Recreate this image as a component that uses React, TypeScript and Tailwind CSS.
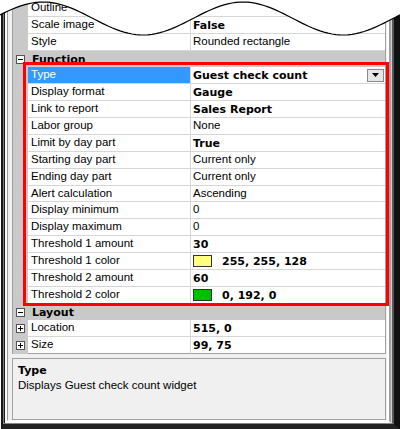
import React from "react";

type Row =
  | { kind: "prop"; label: string; value?: string; bold?: boolean; h: string; selected?: boolean; swatch?: string; plus?: boolean; dropdown?: boolean; last?: boolean }
  | { kind: "head"; label: string; h: string };

const rows: Row[] = [
  { kind: "prop", label: "Outline", value: "", h: "h-[17px]" },
  { kind: "prop", label: "Scale image", value: "False", bold: true, h: "h-[17px]" },
  { kind: "prop", label: "Style", value: "Rounded rectangle", h: "h-[17px]" },
  { kind: "head", label: "Function", h: "h-[16px]" },
  { kind: "prop", label: "Type", value: "Guest check count", bold: true, h: "h-[17px]", selected: true, dropdown: true },
  { kind: "prop", label: "Display format", value: "Gauge", bold: true, h: "h-[17px]" },
  { kind: "prop", label: "Link to report", value: "Sales Report", bold: true, h: "h-[17px]" },
  { kind: "prop", label: "Labor group", value: "None", h: "h-[17px]" },
  { kind: "prop", label: "Limit by day part", value: "True", bold: true, h: "h-[17px]" },
  { kind: "prop", label: "Starting day part", value: "Current only", h: "h-[17px]" },
  { kind: "prop", label: "Ending day part", value: "Current only", h: "h-[17px]" },
  { kind: "prop", label: "Alert calculation", value: "Ascending", h: "h-[16px]" },
  { kind: "prop", label: "Display minimum", value: "0", h: "h-[17px]" },
  { kind: "prop", label: "Display maximum", value: "0", h: "h-[17px]" },
  { kind: "prop", label: "Threshold 1 amount", value: "30", bold: true, h: "h-[17px]" },
  { kind: "prop", label: "Threshold 1 color", value: "255, 255, 128", bold: true, h: "h-[17px]", swatch: "bg-[#ffff80]" },
  { kind: "prop", label: "Threshold 2 amount", value: "60", bold: true, h: "h-[17px]" },
  { kind: "prop", label: "Threshold 2 color", value: "0, 192, 0", bold: true, h: "h-[17px]", swatch: "bg-[#00c000]" },
  { kind: "head", label: "Layout", h: "h-[16px]" },
  { kind: "prop", label: "Location", value: "515, 0", bold: true, h: "h-[17px]", plus: true },
  { kind: "prop", label: "Size", value: "99, 75", bold: true, h: "h-[17px]", plus: true, last: true },
];

const pts: string[] = [];
for (let i = 0; i <= 100; i++) {
  const x = i * 4;
  const y = 18.5 - 16.5 * Math.cos((2 * Math.PI * (x - 43)) / 200);
  pts.push(`${x},${y.toFixed(2)}`);
}
const fillPath = `M0,0 L${pts.join(" L")} L400,0 Z`;
const strokePath = `M${pts.join(" L")}`;

function Box({ plus }: { plus?: boolean }) {
  return (
    <div className="w-[9px] h-[9px] border border-[#555] bg-white relative">
      <div className="absolute left-[1px] top-[3px] w-[5px] h-[1px] bg-black" />
      {plus && <div className="absolute left-[3px] top-[1px] w-[1px] h-[5px] bg-black" />}
    </div>
  );
}

const regular = "font-['Liberation_Sans',Arial,sans-serif] text-[11.5px]";
const bold = "font-['DejaVu_Sans',Verdana,sans-serif] font-bold text-[11px]";

export default function App() {
  return (
    <div className="relative w-[400px] h-[429px] bg-white overflow-hidden text-black">
      <div className="ml-[1px] w-[399px] h-[429px] border-l-[2px] border-l-[#1a1a1a] border-r-[6px] border-r-[#111] border-b-[5px] border-b-[#222]">
        <div className="h-full border-l border-l-[#808080] border-r-[2px] border-r-[#5a5a5a] border-b border-b-[#888]">
          <div className="h-full border-l border-l-[#1a1a1a] border-r border-r-[#d0d0d0]">
            <div className="h-full border-l-[2px] border-l-white border-r-[2px] border-r-[#a0a0a0] border-b-[2px] border-b-white">
              <div className="h-full border-l border-l-[#a0a0a0] border-r-[2px] border-r-white border-b border-b-white bg-[#f0f0f0] pl-[4px] pr-[1px] flex flex-col">
                <div className="border-l border-r border-[#a0a0a0] flex flex-col bg-white">
                  {rows.map((r, i) =>
                    r.kind === "head" ? (
                      <div key={i} className={`flex ${r.h} bg-[#c9c9c9] items-center`}>
                        <div className="w-[15px] shrink-0 flex items-center justify-center">
                          <Box />
                        </div>
                        <div className={`${bold} pl-[4px] leading-none`}>{r.label}</div>
                      </div>
                    ) : (
                      <div key={i} className={`flex ${r.h}`}>
                        <div className="w-[15px] shrink-0 bg-[#c9c9c9] flex items-center justify-center">
                          {r.plus && <Box plus />}
                        </div>
                        <div
                          className={`w-[163px] shrink-0 border-r border-r-[#d6d6d6] border-b ${r.last ? "border-b-[#a0a0a0]" : "border-b-[#d6d6d6]"} pl-[3px] flex items-center ${regular} leading-none whitespace-nowrap ${r.selected ? "bg-[#3399ff] text-white" : ""}`}
                        >
                          {r.label}
                        </div>
                        <div
                          className={`flex-1 min-w-0 border-b ${r.last ? "border-b-[#a0a0a0]" : "border-b-[#d6d6d6]"} pl-[2px] flex items-center whitespace-nowrap leading-none ${r.bold ? bold : regular}`}
                        >
                          {r.swatch && (
                            <div className={`w-[19px] h-[12px] border border-[#333] ${r.swatch} mr-[10px] shrink-0`} />
                          )}
                          <span>{r.value}</span>
                          {r.dropdown && (
                            <div className="ml-auto mr-[1px] w-[17px] h-[13px] border border-[#8a8a8a] bg-[#e6e6e6] flex items-center justify-center">
                              <svg width="7" height="4" viewBox="0 0 7 4">
                                <path d="M0 0 H7 L3.5 4 Z" fill="#000" />
                              </svg>
                            </div>
                          )}
                        </div>
                      </div>
                    )
                  )}
                </div>
                <div className="h-[4px]" />
                <div className="h-[62px] border border-[#a0a0a0] bg-[#f0f0f0] pl-[5px] pt-[5px]">
                  <div className={`${bold} leading-[14px]`}>Type</div>
                  <div className={`${regular} leading-[15px]`}>Displays Guest check count widget</div>
                </div>
              </div>
            </div>
          </div>
        </div>
      </div>

      {/* red highlight annotation */}
      <div className="absolute left-[23px] top-[62px] w-[366px] h-[244px] border-[3px] border-[#ff0000] pointer-events-none" />

      {/* torn wavy top edge */}
      <svg className="absolute left-0 top-0" width="400" height="40" viewBox="0 0 400 40">
        <path d={fillPath} fill="#fff" />
        <path d={strokePath} fill="none" stroke="#000" strokeWidth="1.2" />
      </svg>
    </div>
  );
}
